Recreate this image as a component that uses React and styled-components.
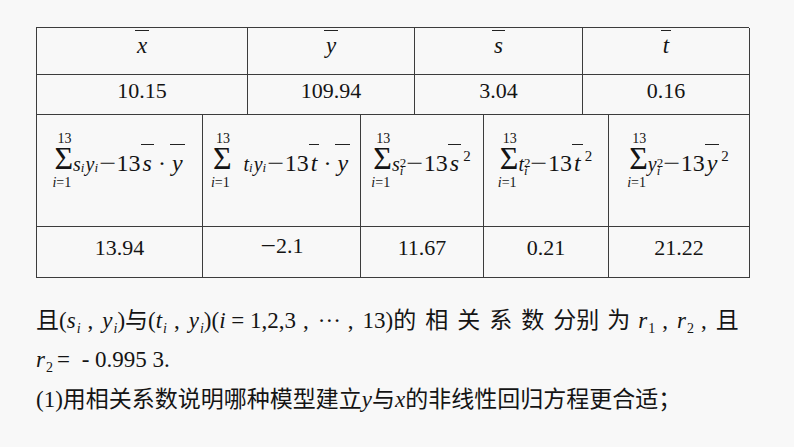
import React from "react";
import styled, { createGlobalStyle } from "styled-components";

const GlobalStyle = createGlobalStyle`
  html, body {
    margin: 0;
    padding: 0;
    background: #f8f8f8;
  }
`;

const LINE = "#3c3c3c";

export default function App() {
  return (
    <>
      <GlobalStyle />
      <Page>
        <TopGrid>
          <HeadCell>
            <Bar $gap={3}>
              <I>x</I>
            </Bar>
          </HeadCell>
          <HeadCell>
            <Bar $gap={3}>
              <I>y</I>
            </Bar>
          </HeadCell>
          <HeadCell>
            <Bar $gap={3}>
              <I>s</I>
            </Bar>
          </HeadCell>
          <HeadCell>
            <Bar $gap={3}>
              <I>t</I>
            </Bar>
          </HeadCell>
          <ValueCell>10.15</ValueCell>
          <ValueCell>109.94</ValueCell>
          <ValueCell>3.04</ValueCell>
          <ValueCell>0.16</ValueCell>
        </TopGrid>

        <BottomGrid>
          <FormulaCell>
            <Sum />
            <Expr>
              <Small>
                <I>s</I>
                <Sub>i</Sub>
                <I>y</I>
                <Sub>i</Sub>
              </Small>
              <Minus>−</Minus>13
              <Bar $gap={6}>
                <I>s</I>
              </Bar>
              <Dot>·</Dot>
              <Bar $gap={6}>
                <I>y</I>
              </Bar>
            </Expr>
          </FormulaCell>
          <FormulaCell>
            <Sum $gap={12} />
            <Expr>
              <Small>
                <I>t</I>
                <Sub>i</Sub>
                <I>y</I>
                <Sub>i</Sub>
              </Small>
              <Minus>−</Minus>13
              <Bar $gap={6}>
                <I>t</I>
              </Bar>
              <Dot>·</Dot>
              <Bar $gap={6}>
                <I>y</I>
              </Bar>
            </Expr>
          </FormulaCell>
          <FormulaCell>
            <Sum />
            <Expr>
              <Small>
                <I>s</I>
                <SubSup>
                  <span>2</span>
                  <I>i</I>
                </SubSup>
              </Small>
              <Minus>−</Minus>13
              <Bar $gap={6}>
                <I>s</I>
              </Bar>
              <Sup>2</Sup>
            </Expr>
          </FormulaCell>
          <FormulaCell>
            <Sum />
            <Expr>
              <Small>
                <I>t</I>
                <SubSup>
                  <span>2</span>
                  <I>i</I>
                </SubSup>
              </Small>
              <Minus>−</Minus>13
              <Bar $gap={6}>
                <I>t</I>
              </Bar>
              <Sup>2</Sup>
            </Expr>
          </FormulaCell>
          <FormulaCell>
            <Sum />
            <Expr>
              <Small>
                <I>y</I>
                <SubSup>
                  <span>2</span>
                  <I>i</I>
                </SubSup>
              </Small>
              <Minus>−</Minus>13
              <Bar $gap={6}>
                <I>y</I>
              </Bar>
              <Sup>2</Sup>
            </Expr>
          </FormulaCell>
          <ValueCell>13.94</ValueCell>
          <ValueCell $lift={4}>
            <Minus>−</Minus>2.1
          </ValueCell>
          <ValueCell>11.67</ValueCell>
          <ValueCell>0.21</ValueCell>
          <ValueCell>21.22</ValueCell>
        </BottomGrid>

        <Text>
          <Line $h={44}>
            <Han>且</Han>(<I>s</I>
            <TSub>i</TSub>
            <Sep>,</Sep>
            <I>y</I>
            <TSub>i</TSub>)<Han>与</Han>(<I>t</I>
            <TSub>i</TSub>
            <Sep>,</Sep>
            <I>y</I>
            <TSub>i</TSub>)(<I>i</I> = 1,2,3
            <Sep>,</Sep>···<Sep>,</Sep>13)
            <Han $gap={9}>的相关系数</Han>
            <Han>分</Han>
            <Han $gap={8}>别为</Han>
            <I>r</I>
            <TSub $up>1</TSub>
            <Sep>,</Sep>
            <I>r</I>
            <TSub $up>2</TSub>
            <Sep>,</Sep>
            <Han>且</Han>
          </Line>
          <Line $h={40}>
            <I>r</I>
            <TSub $up>2</TSub>
            <Eq>=</Eq> - 0.995 3.
          </Line>
          <Line $h={34}>
            (1)<Han>用相关系数说明哪种模型建立</Han>
            <I>y</I>
            <Han>与</Han>
            <I>x</I>
            <Han>的非线性回归方程更合适；</Han>
          </Line>
        </Text>
      </Page>
    </>
  );
}

function Sum({ $gap }) {
  return (
    <SumBlock $gap={$gap}>
      <Upper>13</Upper>
      <Sigma>Σ</Sigma>
      <Lower>
        <I>i</I>=1
      </Lower>
    </SumBlock>
  );
}

const Page = styled.div`
  box-sizing: border-box;
  width: 794px;
  height: 447px;
  overflow: hidden;
  padding: 27px 0 0 36px;
  font-family: "Liberation Serif";
  color: #141414;
`;

const Grid = styled.div`
  display: grid;
  width: 713px;
  border-left: 1px solid ${LINE};
  box-sizing: border-box;
`;

const TopGrid = styled(Grid)`
  grid-template-columns: 211px 167px 168px 167px;
  grid-template-rows: 47px 40px;
  border-top: 1px solid ${LINE};
`;

const BottomGrid = styled(Grid)`
  grid-template-columns: 166px 158px 123px 125px 141px;
  grid-template-rows: 112px 51px;
`;

const Cell = styled.div`
  box-sizing: border-box;
  border-right: 1px solid ${LINE};
  border-bottom: 1px solid ${LINE};
  display: flex;
  justify-content: center;
  font-family: "Liberation Serif";
`;

const HeadCell = styled(Cell)`
  align-items: flex-start;
  padding-top: 2px;
  font-size: 23px;
`;

const ValueCell = styled(Cell)`
  align-items: center;
  padding-bottom: ${(p) => 8 + (p.$lift || 0)}px;
  font-size: 22px;
  line-height: 1;
`;

const FormulaCell = styled(Cell)`
  align-items: flex-start;
  padding-top: 17px;
`;

const I = styled.span`
  font-family: "Liberation Serif";
  font-style: italic;
`;

const Han = styled.span`
  font-family: "Noto Sans CJK SC";
  letter-spacing: ${(p) => p.$gap || 0}px;
`;

const Bar = styled.span`
  display: inline-block;
  border-top: 1px solid #222;
  padding: ${(p) => p.$gap}px 2px 0;
  line-height: 1;
`;

const SumBlock = styled.span`
  display: inline-flex;
  flex-direction: column;
  align-items: flex-start;
  margin-right: ${(p) => p.$gap || 0}px;
`;

const Upper = styled.span`
  font-size: 14px;
  line-height: 14px;
  margin-left: 3px;
`;

const Sigma = styled.span`
  font-size: 32px;
  line-height: 24px;
  height: 24px;
`;

const Lower = styled.span`
  font-size: 14px;
  line-height: 14px;
  margin-top: 6px;
  margin-left: -2px;
`;

const Expr = styled.span`
  display: inline-flex;
  align-items: baseline;
  padding-top: 12px;
  font-size: 24px;
  line-height: 24px;
  white-space: nowrap;
`;

const Small = styled.span`
  display: inline-flex;
  align-items: baseline;
  font-size: 20px;
`;

const Sub = styled.span`
  font-size: 13px;
  font-style: italic;
  position: relative;
  top: 1px;
  margin-right: 1px;
`;

const SubSup = styled.span`
  display: inline-flex;
  flex-direction: column;
  font-size: 13px;
  line-height: 8px;
  transform: translateY(-4px);
`;

const Sup = styled.span`
  font-size: 15px;
  position: relative;
  top: -10px;
  margin-left: 2px;
`;

const Minus = styled.span`
  margin: 0 2px;
  transform: scaleX(1.25);
  display: inline-block;
`;

const Dot = styled.span`
  margin: 0 4px;
`;

const Text = styled.div`
  margin-top: 18px;
  font-family: "Liberation Serif";
  font-size: 23px;
  white-space: nowrap;
`;

const Line = styled.div`
  height: ${(p) => p.$h}px;
  line-height: ${(p) => p.$h}px;
`;

const TSub = styled.span`
  font-size: 14px;
  font-style: ${(p) => (p.$up ? "normal" : "italic")};
  position: relative;
  top: 5px;
  margin-left: 1px;
`;

const Sep = styled.span`
  margin: 0 9px 0 7px;
`;

const Eq = styled.span`
  margin: 0 6px 0 4px;
`;
